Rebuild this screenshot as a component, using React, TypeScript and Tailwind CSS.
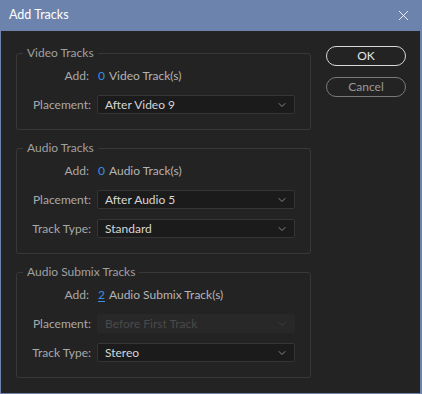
import { ChevronDown, X } from 'lucide-react';

type Row = { label: string; value: string; disabled?: boolean };

const font = { fontFamily: 'Lato, "Open Sans", sans-serif' };

function Dropdown({ value, disabled }: { value: string; disabled?: boolean }) {
  return (
    <div
      className={`flex h-[19px] w-[198px] items-center justify-between rounded-[2px] border pl-[7px] pr-[6px] text-[12px] ${
        disabled
          ? 'border-[#282828] bg-[#282828] text-[#4a4a4a]'
          : 'border-[#353535] bg-[#1b1b1b] text-[#d6d6d6]'
      }`}
    >
      <span>{value}</span>
      <ChevronDown size={12} strokeWidth={1.5} className={disabled ? 'text-[#444]' : 'text-[#a8a8a8]'} />
    </div>
  );
}

function Group({
  title,
  count,
  noun,
  rows,
  focused,
}: {
  title: string;
  count: number;
  noun: string;
  rows: Row[];
  focused?: boolean;
}) {
  return (
    <fieldset className="rounded-[3px] border border-[#383838] pb-[15px]">
      <legend className="ml-[6px] px-[4px] text-[12px] leading-[14px] text-[#a0a0a0]">{title}</legend>
      <div className="mt-[6px] flex h-[20px] items-center text-[12px]">
        <span className="w-[72px] text-right text-[#a9a9a9]">Add:</span>
        <span className={`ml-[9px] text-[#3a8ee6] ${focused ? 'underline underline-offset-2' : ''}`}>{count}</span>
        <span className="ml-[4px] text-[#b4b4b4]">{noun}</span>
      </div>
      <div className="mt-[9px] flex flex-col gap-[10px]">
        {rows.map((r) => (
          <div key={r.label} className="flex items-center text-[12px]">
            <span className="w-[74px] text-right text-[#a9a9a9]">{r.label}</span>
            <div className="ml-[6px]">
              <Dropdown value={r.value} disabled={r.disabled} />
            </div>
          </div>
        ))}
      </div>
    </fieldset>
  );
}

export default function App() {
  return (
    <div className="flex h-[394px] w-[422px] flex-col bg-[#6c83ad]" style={font}>
      <div className="flex h-[31px] items-center justify-between pl-[9px] pr-[10px]">
        <span className="text-[12.5px] text-white">Add Tracks</span>
        <X size={17} strokeWidth={1.2} className="text-white" />
      </div>
      <div className="mb-[1px] ml-[1px] mr-[2px] flex flex-1 bg-[#232323] pl-[15px] pr-[14px] pt-[15px]">
        <div className="flex w-[295px] flex-col gap-[11px]">
          <Group
            title="Video Tracks"
            count={0}
            noun="Video Track(s)"
            rows={[{ label: 'Placement:', value: 'After Video 9' }]}
          />
          <Group
            title="Audio Tracks"
            count={0}
            noun="Audio Track(s)"
            rows={[
              { label: 'Placement:', value: 'After Audio 5' },
              { label: 'Track Type:', value: 'Standard' },
            ]}
          />
          <Group
            title="Audio Submix Tracks"
            count={2}
            noun="Audio Submix Track(s)"
            focused
            rows={[
              { label: 'Placement:', value: 'Before First Track', disabled: true },
              { label: 'Track Type:', value: 'Stereo' },
            ]}
          />
        </div>
        <div className="ml-auto flex w-[80px] flex-col gap-[11px]">
          <button className="h-[20px] rounded-full border border-[#d8d8d8] text-[12px] text-[#e6e6e6]">OK</button>
          <button className="h-[20px] rounded-full border border-[#7a7a7a] text-[12px] text-[#9a9a9a]">Cancel</button>
        </div>
      </div>
    </div>
  );
}
